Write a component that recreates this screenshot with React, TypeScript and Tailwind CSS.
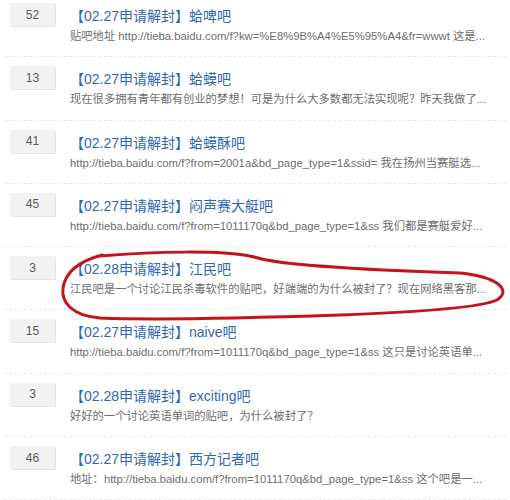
const rows = [
  { n: 52, date: "02.27", name: "蛤啤吧", desc: "贴吧地址 http://tieba.baidu.com/f?kw=%E8%9B%A4%E5%95%A4&fr=wwwt 这是..." },
  { n: 13, date: "02.27", name: "蛤蟆吧", desc: "现在很多拥有青年都有创业的梦想！可是为什么大多数都无法实现呢？昨天我做了..." },
  { n: 41, date: "02.27", name: "蛤蟆酥吧", desc: "http://tieba.baidu.com/f?from=2001a&bd_page_type=1&ssid= 我在扬州当赛艇选..." },
  { n: 45, date: "02.27", name: "闷声赛大艇吧", desc: "http://tieba.baidu.com/f?from=1011170q&bd_page_type=1&ss 我们都是赛艇爱好..." },
  { n: 3, date: "02.28", name: "江民吧", desc: "江民吧是一个讨论江民杀毒软件的贴吧，好端端的为什么被封了？现在网络黑客那..." },
  { n: 15, date: "02.27", name: "naive吧", desc: "http://tieba.baidu.com/f?from=1011170q&bd_page_type=1&ss 这只是讨论英语单..." },
  { n: 3, date: "02.28", name: "exciting吧", desc: "好好的一个讨论英语单词的贴吧，为什么被封了？" },
  { n: 46, date: "02.27", name: "西方记者吧", desc: "地址：http://tieba.baidu.com/f?from=1011170q&bd_page_type=1&ss 这个吧是一..." },
];

export default function App() {
  return (
    <div className="relative w-[510px] h-[500px] overflow-hidden bg-white font-['Liberation_Sans','Noto_Sans_CJK_SC',sans-serif]">
      <div className="-mt-[6px] flex flex-col">
        {rows.map((r, i) => (
          <div key={i} className="flex h-[63.3px] border-b border-dashed border-[#e8e8e8] mx-[4px] pt-[9px]">
            <div className="ml-[6px] w-[45px] h-[23px] shrink-0 bg-[#f2f2f2] shadow-[1px_1px_0_#e6e6e6] flex items-center justify-center text-[12px] text-[#5a5a5a]">
              {r.n}
            </div>
            <div className="ml-[15px] min-w-0 flex-1">
              <div className="mt-[3px] leading-[20px] text-[14px] text-[#3167b4] whitespace-nowrap">
                【{r.date}申请解封】{r.name}
              </div>
              <div className="leading-[20px] text-[11.3px] text-[#6e6e6e] whitespace-nowrap overflow-hidden">
                {r.desc}
              </div>
            </div>
          </div>
        ))}
      </div>
      <svg className="absolute left-0 top-0 pointer-events-none" width="510" height="500" viewBox="0 0 510 500">
        <path
          d="M 100 256 C 150 252, 225 249, 258 258 C 285 266, 400 271, 460 273 C 498 277, 512 290, 497 300 C 480 308, 420 312, 340 315 C 250 318, 150 320, 100 318 C 72 316, 61 302, 63 288 C 65 274, 76 262, 102 255"
          fill="none"
          stroke="#c3141c"
          strokeWidth="3"
          strokeLinecap="round"
        />
      </svg>
    </div>
  );
}
